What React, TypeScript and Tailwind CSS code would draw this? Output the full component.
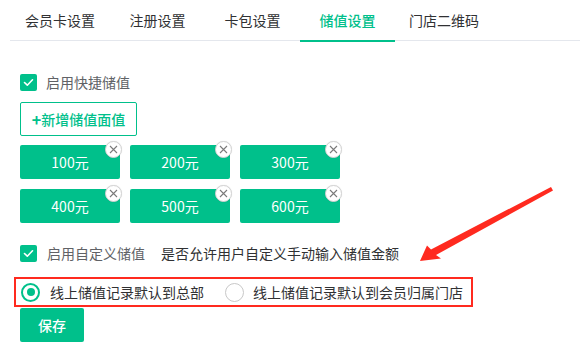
import { useState } from "react";

const tabs = [
  { label: "会员卡设置", w: "w-[100px]" },
  { label: "注册设置", w: "w-[95px]" },
  { label: "卡包设置", w: "w-[95px]" },
  { label: "储值设置", w: "w-[95px]" },
  { label: "门店二维码", w: "w-[98px]" },
];

const amounts = ["100元", "200元", "300元", "400元", "500元", "600元"];

function Check({ checked }: { checked: boolean }) {
  return (
    <span
      className={`flex h-[17px] w-[17px] shrink-0 items-center justify-center rounded-[2px] ${
        checked ? "bg-[#00c08b]" : "border border-[#dcdfe6] bg-white"
      }`}
    >
      {checked && (
        <svg width="11" height="9" viewBox="0 0 11 9" fill="none">
          <path d="M1.5 4.5 L4.3 7.2 L9.5 1.8" stroke="white" strokeWidth="1.6" strokeLinecap="round" strokeLinejoin="round" />
        </svg>
      )}
    </span>
  );
}

function Radio({ checked }: { checked: boolean }) {
  return (
    <span
      className={`flex h-[19px] w-[19px] shrink-0 items-center justify-center rounded-full bg-white ${
        checked ? "border-2 border-[#00c08b]" : "border-[1.5px] border-[#c8c8c8]"
      }`}
    >
      {checked && <span className="h-[8px] w-[8px] rounded-full bg-[#00c08b]" />}
    </span>
  );
}

export default function App() {
  const [active, setActive] = useState(3);
  const [quick, setQuick] = useState(true);
  const [custom, setCustom] = useState(true);
  const [target, setTarget] = useState(0);
  const [items, setItems] = useState(amounts);

  return (
    <div
      className="relative h-[355px] w-[580px] overflow-hidden bg-white pl-[10px] text-[14px]"
      style={{ fontFamily: '"Noto Sans CJK SC", "Noto Sans", sans-serif' }}
    >
      <div className="flex h-[41px] border-b border-[#e4e7ed]">
        {tabs.map((t, i) => (
          <button
            key={t.label}
            onClick={() => setActive(i)}
            className={`relative flex h-10 ${t.w} items-center justify-center leading-none ${
              i === active ? "font-medium text-[#00c08b]" : "text-[#303133]"
            }`}
          >
            {t.label}
            {i === active && <span className="absolute bottom-[-2px] left-0 right-0 h-[2px] bg-[#00c08b]" />}
          </button>
        ))}
      </div>

      <div className="pl-[10px]">
        <label className="mt-[32px] flex h-[18px] items-center gap-[9px]" onClick={() => setQuick(!quick)}>
          <Check checked={quick} />
          <span className="leading-none text-[#606266]">启用快捷储值</span>
        </label>

        <button className="mt-[11px] flex h-[34px] w-[117px] items-center justify-center rounded-[2px] border border-[#00c08b] font-medium leading-none text-[#00c08b]">
          <span className="text-[16px] font-bold">+</span>新增储值面值
        </button>

        <div className="mt-[9px] grid w-[320px] grid-cols-3 gap-[10px]">
          {items.map((a) => (
            <div
              key={a}
              className="relative flex h-[34px] w-[100px] items-center justify-center rounded-[2px] bg-[#00c08b] leading-none text-white"
            >
              {a}
              <button
                onClick={() => setItems(items.filter((x) => x !== a))}
                className="absolute right-[-2px] top-[-4px] flex h-[17px] w-[17px] items-center justify-center rounded-full border border-[#d4d4d4] bg-white shadow-[0_0_1px_rgba(0,0,0,0.15)]"
              >
                <svg width="9" height="9" viewBox="0 0 9 9">
                  <path d="M1 1 L8 8 M8 1 L1 8" stroke="#7a7a7a" strokeWidth="1.1" />
                </svg>
              </button>
            </div>
          ))}
        </div>

        <div className="mt-[21px] flex h-[18px] items-center">
          <label className="flex items-center gap-[10px]" onClick={() => setCustom(!custom)}>
            <Check checked={custom} />
            <span className="leading-none text-[#606266]">启用自定义储值</span>
          </label>
          <span className="ml-[16px] leading-none text-[#303133]">是否允许用户自定义手动输入储值金额</span>
        </div>

        <div className="-ml-[6px] mt-[15px] flex h-[30px] w-[459px] items-center border-2 border-[#ff2a1f] pl-[5px]">
          <label className="flex items-center gap-[10px]" onClick={() => setTarget(0)}>
            <Radio checked={target === 0} />
            <span className="leading-none text-[#303133]">线上储值记录默认到总部</span>
          </label>
          <label className="ml-[21px] flex items-center gap-[9px]" onClick={() => setTarget(1)}>
            <Radio checked={target === 1} />
            <span className="leading-none text-[#303133]">线上储值记录默认到会员归属门店</span>
          </label>
        </div>

        <button className="mt-px flex h-[34px] w-[64px] items-center justify-center rounded-[2px] bg-[#00c08b] font-medium leading-none text-white">
          保存
        </button>
      </div>

      <svg className="pointer-events-none absolute left-0 top-0" width="580" height="355" viewBox="0 0 580 355">
        <polygon
          points="420,261 427,245.5 431,249.5 551,187 553,190.5 436,255 441,258.5"
          fill="#ff2a1f"
        />
      </svg>
    </div>
  );
}
